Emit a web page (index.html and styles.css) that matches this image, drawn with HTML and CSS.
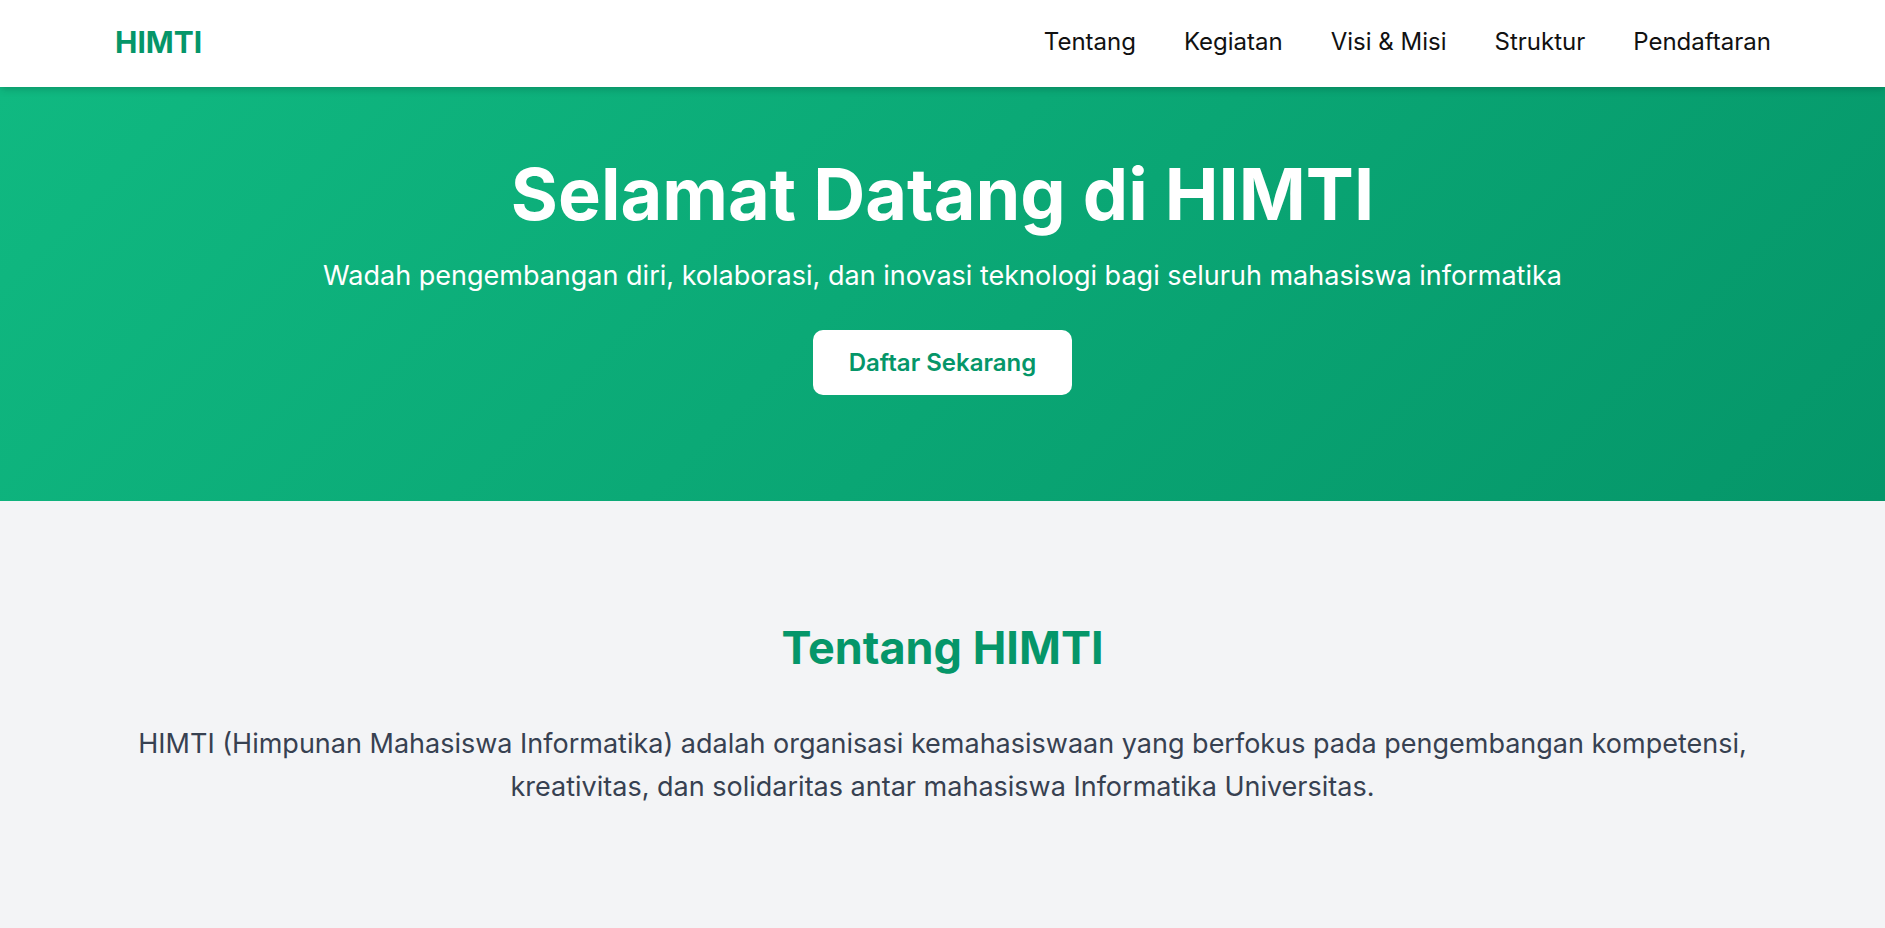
FILE: index.html
```html
<!DOCTYPE html>
<html lang="id">
<head>
<meta charset="utf-8">
<title>HIMTI</title>
<link rel="stylesheet" href="styles.css">
</head>
<body>
<header class="site-header">
  <div class="container header-inner">
    <a class="logo" href="#">HIMTI</a>
    <nav class="nav">
      <a href="#tentang">Tentang</a>
      <a href="#kegiatan">Kegiatan</a>
      <a href="#visi">Visi &amp; Misi</a>
      <a href="#struktur">Struktur</a>
      <a href="#daftar">Pendaftaran</a>
    </nav>
  </div>
</header>
<section class="hero">
  <h1 class="hero-title">Selamat Datang di HIMTI</h1>
  <p class="hero-sub">Wadah pengembangan diri, kolaborasi, dan inovasi teknologi bagi seluruh mahasiswa informatika</p>
  <a class="btn" href="#daftar">Daftar Sekarang</a>
</section>
<section class="about" id="tentang">
  <div class="container">
    <h2 class="about-title">Tentang HIMTI</h2>
    <p class="about-text">HIMTI (Himpunan Mahasiswa Informatika) adalah organisasi kemahasiswaan yang berfokus pada pengembangan kompetensi, kreativitas, dan solidaritas antar mahasiswa Informatika Universitas.</p>
  </div>
</section>
</body>
</html>
```

FILE: styles.css
```css
* { box-sizing: border-box; }
html, body { margin: 0; padding: 0; }
body {
  font-family: Inter, "Noto Sans", "Liberation Sans", sans-serif;
  background: #f3f4f6;
  color: #111827;
}
a { text-decoration: none; }

.container {
  padding: 0 115px;
}

.site-header {
  position: relative;
  z-index: 2;
  background: #ffffff;
  box-shadow: 0 5px 7px -1px rgba(0,0,0,0.1), 0 2px 5px -2px rgba(0,0,0,0.1);
}
.header-inner {
  height: 87px;
  padding-bottom: 3px;
  padding-right: 114px;
  display: flex;
  align-items: center;
  justify-content: space-between;
}
.logo {
  font-size: 30px;
  line-height: 40px;
  font-weight: 700;
  color: #059669;
}
.nav {
  display: flex;
  gap: 48px;
}
.nav a {
  font-size: 24px;
  line-height: 32px;
  color: #111111;
}

.hero {
  background: linear-gradient(135deg, #10b981, #059669);
  color: #ffffff;
  text-align: center;
  padding: 71px 20px 106px;
}
.hero-title {
  margin: 0;
  font-size: 72px;
  line-height: 72px;
  font-weight: 700;
}
.hero-sub {
  margin: 28px 0 0;
  font-size: 27px;
  line-height: 36px;
}
.btn {
  display: inline-block;
  margin-top: 36px;
  background: #ffffff;
  color: #059669;
  font-size: 24px;
  line-height: 35px;
  font-weight: 600;
  padding: 15px 36px;
  border-radius: 10px;
}

.about {
  padding: 122px 0 120px;
  text-align: center;
}
.about-title {
  margin: 0;
  font-size: 45px;
  line-height: 50px;
  font-weight: 700;
  color: #059669;
}
.about-text {
  margin: 49px 0 0;
  font-size: 27px;
  line-height: 43px;
  color: #374151;
}
```
